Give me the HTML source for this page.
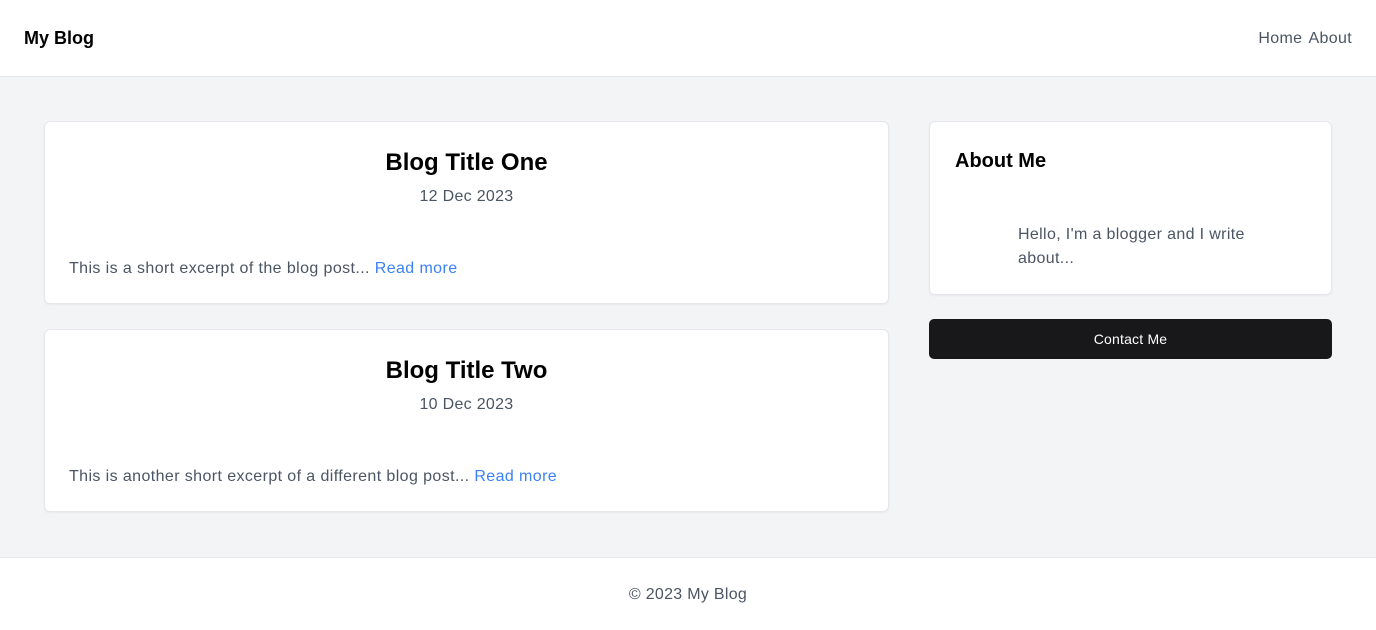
<!DOCTYPE html>
<html><head><meta charset="utf-8"><style>
*{box-sizing:border-box;margin:0;padding:0}
body{width:1376px;height:630px;font-family:"Liberation Sans",sans-serif;background:#f3f4f6;color:#4b5563;overflow:hidden}
header{height:77px;background:#fff;border-bottom:1px solid #e5e7eb;position:relative}
.logo{position:absolute;left:24px;top:28px;font-size:18px;font-weight:bold;color:#000}
nav{position:absolute;right:24px;top:30px;font-size:16px;color:#4b5563;letter-spacing:0.35px}
nav span{margin-left:6px}
.card{position:absolute;background:#fff;border:1px solid #e5e7eb;border-radius:6px;box-shadow:0 1px 2px rgba(0,0,0,.05)}
.post h2{position:absolute;left:0;right:0;text-align:center;font-size:24px;color:#000;top:27px}
.post .d{position:absolute;left:0;right:0;text-align:center;font-size:16px;top:66px;letter-spacing:0.3px}
.post p{position:absolute;left:24px;top:138px;font-size:16px;letter-spacing:0.4px}
a{color:#3b82f6;text-decoration:none}
footer{position:absolute;top:557px;left:0;width:1376px;height:73px;background:#fff;border-top:1px solid #e5e7eb;text-align:center;padding-top:28px;font-size:16px;letter-spacing:0.3px}
.btn{position:absolute;left:929px;top:319px;width:403px;height:40px;background:#18181b;color:#fff;border-radius:5px;text-align:center;line-height:40px;font-size:14px;letter-spacing:0.2px}
</style></head><body>
<header><div class="logo">My Blog</div><nav><span>Home</span><span>About</span></nav></header>
<div class="card post" style="left:44px;top:121px;width:845px;height:183px"><h2>Blog Title One</h2><div class="d">12 Dec 2023</div><p>This is a short excerpt of the blog post... <a>Read more</a></p></div>
<div class="card post" style="left:44px;top:329px;width:845px;height:183px"><h2>Blog Title Two</h2><div class="d">10 Dec 2023</div><p>This is another short excerpt of a different blog post... <a>Read more</a></p></div>
<div class="card" style="left:929px;top:121px;width:403px;height:174px">
<div style="position:absolute;left:25px;top:28px;font-size:20px;font-weight:bold;color:#000">About Me</div>
<div style="position:absolute;left:88px;top:101px;width:260px;font-size:16px;line-height:24px;letter-spacing:0.35px">Hello, I'm a blogger and I write about...</div></div>
<div class="btn">Contact Me</div>
<footer>© 2023 My Blog</footer>
</body></html>
